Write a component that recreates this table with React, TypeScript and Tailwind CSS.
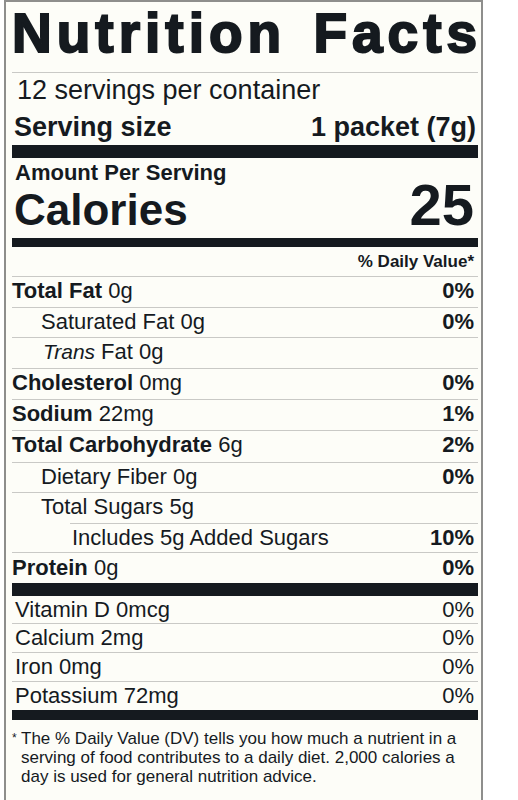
type Nutrient = {
  label: string;
  amount: string;
  dv?: string;
  bold?: boolean;
  italicPrefix?: string;
  pad: string;
  h: string;
  line: string;
};

const nutrients: Nutrient[] = [
  { label: 'Total Fat', amount: '0g', dv: '0%', bold: true, pad: 'pl-0', h: 'h-[31px]', line: 'border-b' },
  { label: 'Saturated Fat', amount: '0g', dv: '0%', pad: 'pl-[29px]', h: 'h-[30px]', line: 'border-b' },
  { label: 'Fat', italicPrefix: 'Trans', amount: '0g', pad: 'pl-[31px]', h: 'h-[31px]', line: 'border-b' },
  { label: 'Cholesterol', amount: '0mg', dv: '0%', bold: true, pad: 'pl-0', h: 'h-[31px]', line: 'border-b' },
  { label: 'Sodium', amount: '22mg', dv: '1%', bold: true, pad: 'pl-0', h: 'h-[31px]', line: 'border-b' },
  { label: 'Total Carbohydrate', amount: '6g', dv: '2%', bold: true, pad: 'pl-0', h: 'h-[32px]', line: 'border-b' },
  { label: 'Dietary Fiber', amount: '0g', dv: '0%', pad: 'pl-[29px]', h: 'h-[30px]', line: 'border-b' },
  { label: 'Total Sugars', amount: '5g', pad: 'pl-[29px]', h: 'h-[30px]', line: 'border-0' },
];

const vitamins = [
  { label: 'Vitamin D 0mcg', h: 'h-[28px]', line: 'border-b' },
  { label: 'Calcium 2mg', h: 'h-[29px]', line: 'border-b' },
  { label: 'Iron 0mg', h: 'h-[29px]', line: 'border-b' },
  { label: 'Potassium 72mg', h: 'h-[28px]', line: 'border-0' },
];

const NutrientRow = ({ n }: { n: Nutrient }) => (
  <div className={`flex items-start justify-between border-[#c9c9c6] pr-[4px] text-[22px] leading-[27px] ${n.h} ${n.line} ${n.pad}`}>
    <span>
      {n.italicPrefix && <i className="text-[21px]">{n.italicPrefix} </i>}
      {n.bold ? <b>{n.label}</b> : n.label} {n.amount}
    </span>
    {n.dv && <b>{n.dv}</b>}
  </div>
);

export default function App() {
  return (
    <div className="min-h-screen bg-white font-['Liberation_Sans',Arial,sans-serif] text-[#151a1f]">
      <div className="ml-[4px] w-[479px] border-x-2 border-t-2 border-[#8e8e8c] bg-[#fdfdf8] pl-[6px] pr-[3px] pb-[40px]">
        {/* Title */}
        <div className="h-[71px] border-b border-[#c9c9c6] pt-[4px]">
          <h1 className="whitespace-nowrap text-[55px] font-bold leading-[55px] tracking-[5px] [word-spacing:7px] [-webkit-text-stroke:2px_#151a1f]">
            Nutrition Facts
          </h1>
        </div>

        <div className="h-[34px] pl-[5px] text-[27px] leading-[34px]">12 servings per container</div>
        <div className="flex h-[38px] justify-between pl-[2px] pr-[2px] pt-[2px] text-[27px] font-bold leading-[36px]">
          <span>Serving size</span>
          <span>1 packet (7g)</span>
        </div>
        <div className="h-[13px] bg-[#151a1f]" />

        {/* Calories */}
        <div className="flex h-[80px] items-baseline-last justify-between pb-[4px] pl-[2px] pr-[4px]">
          <div className="flex flex-col">
            <span className="pl-[1px] text-[22px] font-bold leading-[26px]">Amount Per Serving</span>
            <span className="text-[44px] font-bold leading-[48px]">Calories</span>
          </div>
          <span className="text-[58px] font-bold leading-[58px]">25</span>
        </div>
        <div className="h-[9px] bg-[#151a1f]" />

        <div className="h-[30px] border-b border-[#c9c9c6] pr-[4px] text-right text-[17px] font-bold leading-[29px]">
          % Daily Value*
        </div>

        {nutrients.map((n) => (
          <NutrientRow key={n.label} n={n} />
        ))}
        <div className="ml-[58px] flex h-[30px] items-start justify-between border-y border-[#c9c9c6] pl-[2px] pr-[4px] text-[22px] leading-[27px]">
          <span>Includes 5g Added Sugars</span>
          <b>10%</b>
        </div>
        <div className="-mt-px flex h-[31px] items-start justify-between border-t border-[#c9c9c6] pr-[4px] pt-px text-[22px] leading-[27px]">
          <span>
            <b>Protein</b> 0g
          </span>
          <b>0%</b>
        </div>
        <div className="h-[13px] bg-[#151a1f]" />

        {vitamins.map((v) => (
          <div
            key={v.label}
            className={`flex items-start justify-between border-[#c9c9c6] pl-[3px] pr-[4px] text-[22px] leading-[27px] ${v.h} ${v.line}`}
          >
            <span>{v.label}</span>
            <span>0%</span>
          </div>
        ))}
        <div className="h-[10px] bg-[#151a1f]" />

        {/* Footnote */}
        <div className="flex pt-[9px] text-[17px] leading-[19px]">
          <span className="w-[9px] shrink-0 text-[12px] leading-[19px]">*</span>
          <p>
            The % Daily Value (DV) tells you how much a nutrient in a
            <br />
            serving of food contributes to a daily diet. 2,000 calories a
            <br />
            day is used for general nutrition advice.
          </p>
        </div>
      </div>
    </div>
  );
}
